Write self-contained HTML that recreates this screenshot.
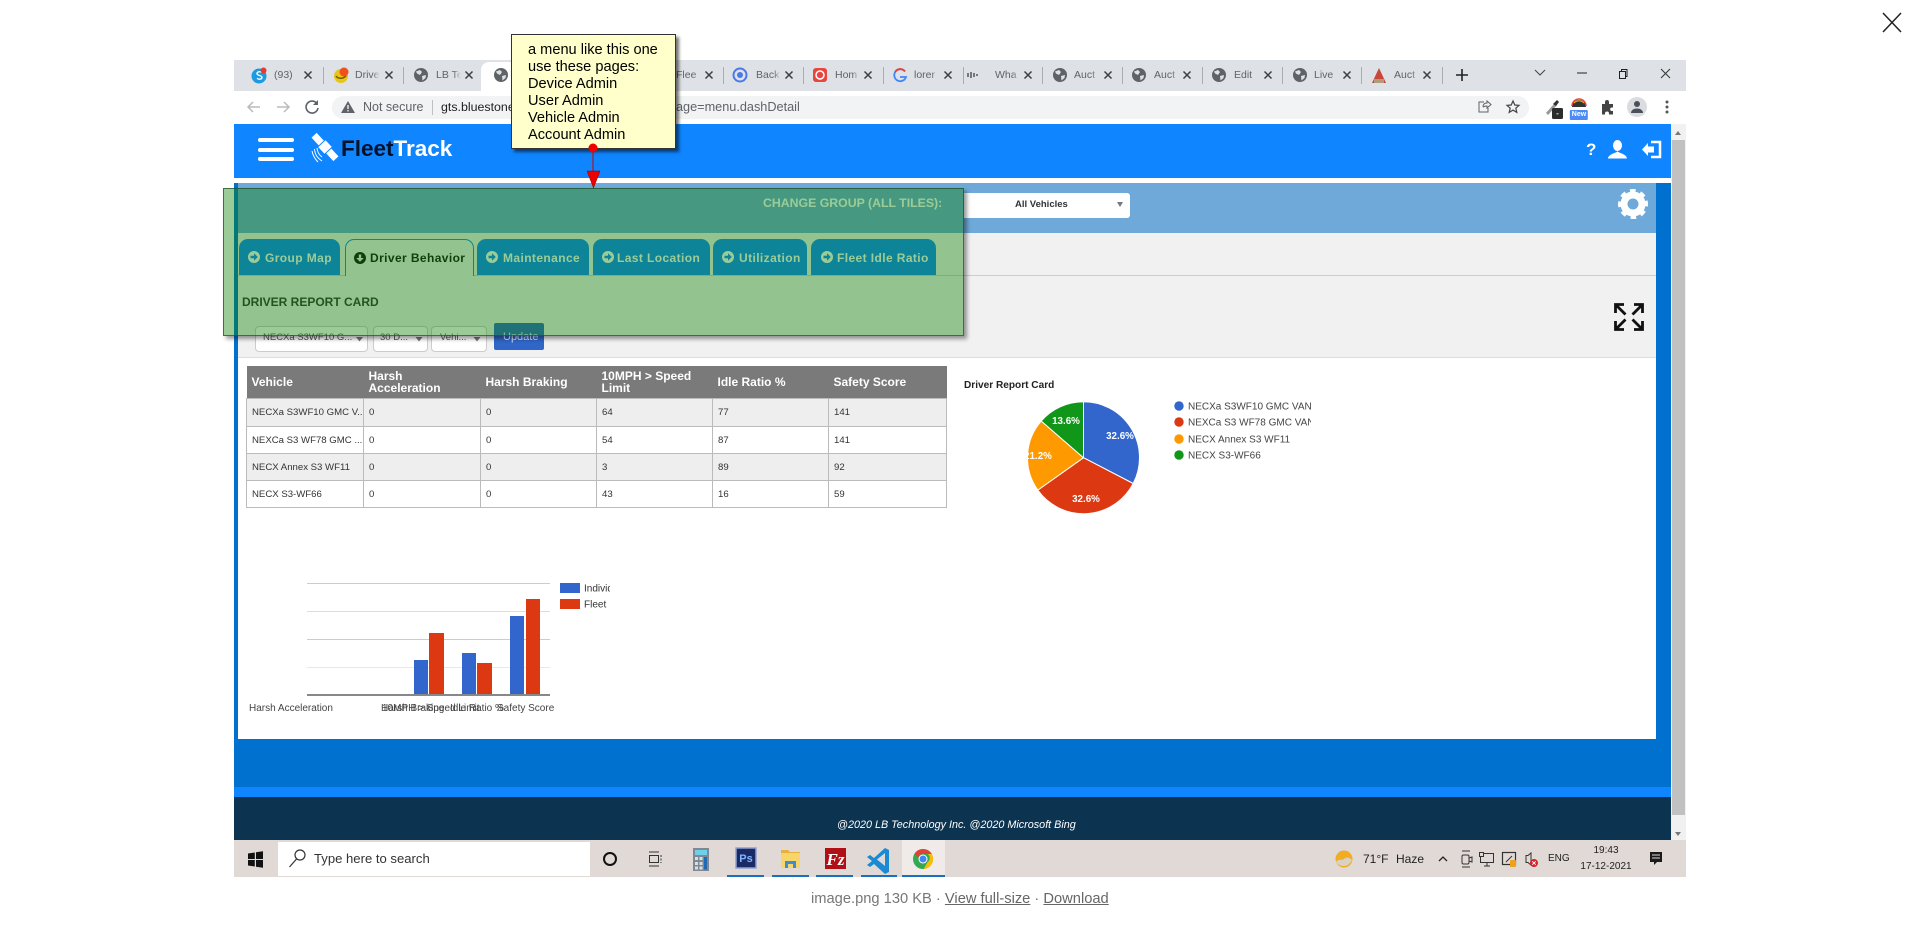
<!DOCTYPE html>
<html><head><meta charset="utf-8"><title>image.png</title>
<style>
html,body{margin:0;padding:0;background:#fff}
body{position:relative;width:1920px;height:937px;overflow:hidden;font-family:"Liberation Sans",sans-serif;color:#000}
.a{position:absolute;white-space:nowrap}
.b{position:absolute}
svg.l{position:absolute;left:0;top:0;overflow:visible}
.tab{font-size:10.5px;line-height:16px;top:67px;color:#5f6368;overflow:hidden;width:25px;-webkit-mask-image:linear-gradient(90deg,#000 70%,transparent);mask-image:linear-gradient(90deg,#000 70%,transparent)}
.pg{top:239px;height:36px;background:#0f85ff;border-radius:9px 9px 0 0}
.pt{font-weight:bold;font-size:12px;line-height:16px;top:250px;color:#fff;letter-spacing:.4px}
.sel{top:326px;height:24px;background:#fff;border:1px solid #ccc;border-radius:4px;box-sizing:content-box}
.st{font-size:9.5px;line-height:14px;top:331px;color:#555}
table{position:absolute;left:246px;top:366px;width:700px;height:141px;border-collapse:collapse;table-layout:fixed;font-size:9.6px;color:#333}
th{background:#7a7a7a;color:#fff;font-size:12px;line-height:12px;text-align:left;font-weight:bold;padding:0 5px;height:32px;border:0}
td{border:1px solid #bbb;padding:0 5px;white-space:nowrap;overflow:hidden}
tr.o td{background:#eee}
.note{position:absolute;left:511px;top:34px;width:163px;height:113px;background:#ffc;border:1px solid #333;box-shadow:3px 3px 3px rgba(0,0,0,.55)}
.nl{position:absolute;left:528px;font-size:14.6px;line-height:17px;color:#000;white-space:nowrap}
.ov{position:absolute;left:223px;top:188px;width:741px;height:148px;background:rgba(12,131,3,.41);box-shadow:inset 0 0 0 1px rgba(30,80,50,.75),3px 3px 4px rgba(0,0,0,.4)}
.cap{left:811px;top:890px;font-size:14.7px;line-height:18px;color:#777}
.cap u{color:#666}
</style></head>
<body>
<!-- browser chrome -->
<div class="b" style="left:234px;top:60px;width:1452px;height:31px;background:#dee1e6"></div>
<div class="b" style="left:481px;top:62px;width:180px;height:29px;background:#fff;border-radius:8px 8px 0 0"></div>
<div class="b" style="left:234px;top:91px;width:1452px;height:33px;background:#fff"></div>
<div class="b" style="left:332px;top:96px;width:1197px;height:23px;background:#f1f3f4;border-radius:12px"></div>

<!-- page -->
<div class="b" style="left:234px;top:124px;width:1437px;height:54px;background:#0f85ff"></div>
<div class="b" style="left:234px;top:183px;width:4px;height:556px;background:#0071ce"></div>
<div class="b" style="left:1656px;top:183px;width:15px;height:556px;background:#0071ce"></div>
<div class="b" style="left:238px;top:183px;width:1418px;height:50px;background:#6fa9d9"></div>
<div class="b" style="left:238px;top:233px;width:1418px;height:124px;background:#f1f1f1;border-bottom:1px solid #ddd"></div>
<div class="b" style="left:238px;top:275px;width:1418px;height:1px;background:#ccc"></div>
<div class="b" style="left:238px;top:358px;width:1418px;height:381px;background:#fff"></div>
<div class="b" style="left:234px;top:739px;width:1437px;height:48px;background:#0071ce"></div>
<div class="b" style="left:234px;top:787px;width:1437px;height:10px;background:#0f85ff"></div>
<div class="b" style="left:234px;top:797px;width:1437px;height:43px;background:#0c3350"></div>
<div class="b" style="left:1671px;top:124px;width:15px;height:716px;background:#f1f1f1"></div>
<div class="b" style="left:1672px;top:140px;width:13px;height:675px;background:#c1c1c1"></div>
<div class="b" style="left:234px;top:840px;width:1452px;height:37px;background:#e0d9d5"></div>
<div class="b" style="left:278px;top:842px;width:312px;height:34px;background:#fff"></div>
<div class="b" style="left:902px;top:840px;width:43px;height:37px;background:#f0ebe8"></div>

<!-- tab labels -->
<div class="a tab" style="left:274px">(93)</div>
<div class="a tab" style="left:355px">Drive</div>
<div class="a tab" style="left:436px">LB Te</div>
<div class="a tab" style="left:676px">Flee</div>
<div class="a tab" style="left:756px">Back</div>
<div class="a tab" style="left:835px">Hom</div>
<div class="a tab" style="left:914px">lorer</div>
<div class="a tab" style="left:995px">Wha</div>
<div class="a tab" style="left:1074px">Auct</div>
<div class="a tab" style="left:1154px">Auct</div>
<div class="a tab" style="left:1234px">Edit</div>
<div class="a tab" style="left:1314px">Live</div>
<div class="a tab" style="left:1394px">Auct</div>
<div class="a" style="left:363px;top:99px;font-size:12.5px;line-height:16px;color:#5f6368">Not secure</div>
<div class="a" style="left:441px;top:99px;font-size:12.4px;line-height:16px;color:#202124;width:70px;overflow:hidden">gts.bluestone</div>
<div class="a" style="left:676px;top:99px;font-size:12.7px;line-height:16px;color:#5f6368">age=menu.dashDetail</div>
<div class="a" style="left:1579px;top:110px;transform:translateX(-50%);font-size:7px;font-weight:bold;line-height:10px;color:#fff;background:#4c8bf5;padding:0 2px;border-radius:1px;z-index:2">New</div>

<!-- header text -->
<div class="a" style="left:341px;top:136px;font-size:22.5px;line-height:26px;font-weight:bold;color:#06122a">Fleet<span style="color:#fff">Track</span></div>
<div class="a" style="left:1586px;top:140px;font-size:17px;line-height:20px;font-weight:bold;color:#fff">?</div>

<!-- group bar -->
<div class="b" style="left:964px;top:193px;width:166px;height:25px;background:#fff;border-radius:0 3px 3px 0"></div>
<div class="a" style="left:1015px;top:198px;font-size:9.5px;font-weight:bold;line-height:14px;color:#333">All Vehicles</div>
<div class="a" style="left:763px;top:195px;font-size:12.3px;font-weight:bold;line-height:16px;color:#fff">CHANGE GROUP (ALL TILES):</div>

<!-- page tabs -->
<div class="b pg" style="left:239px;width:101px"></div>
<div class="b pg" style="left:345px;width:129px;background:#f1f1f1;border:1px solid #0f85ff;border-bottom:0;box-sizing:border-box;height:37px"></div>
<div class="b pg" style="left:477px;width:112px"></div>
<div class="b pg" style="left:593px;width:117px"></div>
<div class="b pg" style="left:713px;width:94px"></div>
<div class="b pg" style="left:811px;width:125px"></div>
<div class="a pt" style="left:265px">Group Map</div>
<div class="a pt" style="left:370px;color:#111">Driver Behavior</div>
<div class="a pt" style="left:503px">Maintenance</div>
<div class="a pt" style="left:617px">Last Location</div>
<div class="a pt" style="left:739px">Utilization</div>
<div class="a pt" style="left:837px">Fleet Idle Ratio</div>
<div class="a" style="left:242px;top:294px;font-size:12px;line-height:16px;font-weight:bold;color:#333">DRIVER REPORT CARD</div>

<!-- filters -->
<div class="b sel" style="left:255px;width:111px"></div>
<div class="b sel" style="left:373px;width:53px"></div>
<div class="b sel" style="left:431px;width:54px"></div>
<div class="a st" style="left:263px">NECXa S3WF10 G...</div>
<div class="a st" style="left:380px">30 D...</div>
<div class="a st" style="left:440px">Vehi...</div>
<div class="b" style="left:494px;top:323px;width:50px;height:27px;background:#2f66c8;border-radius:2px"></div>
<div class="a" style="left:503px;top:329px;font-size:11px;line-height:16px;color:#dfe8fa">Update</div>

<!-- table -->
<table>
<colgroup><col style="width:117px"><col style="width:117px"><col style="width:116px"><col style="width:116px"><col style="width:116px"><col style="width:118px"></colgroup>
<tr><th>Vehicle</th><th>Harsh<br>Acceleration</th><th>Harsh Braking</th><th>10MPH &gt; Speed<br>Limit</th><th>Idle Ratio %</th><th>Safety Score</th></tr>
<tr class="o" style="height:28px"><td>NECXa S3WF10 GMC V...</td><td>0</td><td>0</td><td>64</td><td>77</td><td>141</td></tr>
<tr style="height:27px"><td>NEXCa S3 WF78 GMC ...</td><td>0</td><td>0</td><td>54</td><td>87</td><td>141</td></tr>
<tr class="o" style="height:27px"><td>NECX Annex S3 WF11</td><td>0</td><td>0</td><td>3</td><td>89</td><td>92</td></tr>
<tr style="height:27px"><td>NECX S3-WF66</td><td>0</td><td>0</td><td>43</td><td>16</td><td>59</td></tr>
</table>

<!-- icons and charts -->
<svg class="l" width="1920" height="937" viewBox="0 0 1920 937">
<defs>
<g id="x"><path d="M-3.5-3.5L3.5 3.5M3.5-3.5L-3.5 3.5" stroke="#3c4043" stroke-width="1.5" fill="none"/></g>
<g id="gl"><circle r="7" fill="#5f6368"/><path d="M-5-3.5L-1-5 1-3-1 0-4-1.5ZM1 1L5 0 4.5 3 1.5 5.5Z" fill="#dee1e6"/></g>
<g id="arr"><circle r="6" fill="#fff"/><path d="M-3.5-1.2H0V-3.8L3.8 0 0 3.8V1.2H-3.5Z" fill="#0f85ff"/></g>
</defs>
<!-- tab separators -->
<g fill="#a9adb3"><rect x="323" y="67" width="1" height="17"/><rect x="403" y="67" width="1" height="17"/><rect x="723" y="67" width="1" height="17"/><rect x="803" y="67" width="1" height="17"/><rect x="883" y="67" width="1" height="17"/><rect x="963" y="67" width="1" height="17"/><rect x="1042" y="67" width="1" height="17"/><rect x="1122" y="67" width="1" height="17"/><rect x="1202" y="67" width="1" height="17"/><rect x="1282" y="67" width="1" height="17"/><rect x="1361" y="67" width="1" height="17"/><rect x="1442" y="67" width="1" height="17"/></g>
<use href="#x" x="308" y="75"/><use href="#x" x="389" y="75"/><use href="#x" x="469" y="75"/><use href="#x" x="709" y="75"/><use href="#x" x="789" y="75"/><use href="#x" x="868" y="75"/><use href="#x" x="948" y="75"/><use href="#x" x="1028" y="75"/><use href="#x" x="1108" y="75"/><use href="#x" x="1187" y="75"/><use href="#x" x="1268" y="75"/><use href="#x" x="1347" y="75"/><use href="#x" x="1427" y="75"/>
<!-- favicons -->
<circle cx="259" cy="76" r="7.5" fill="#1d9be0"/><path d="M262 72.5c-2-1.5-5-.8-5 1 0 2.500 5 1.500 5 4 0 1.800-3 2.300-5 .8" stroke="#fff" stroke-width="1.400" fill="none"/><circle cx="263.500" cy="70.500" r="3" fill="#e8392d"/>
<circle cx="341" cy="76" r="7" fill="#e6c619"/><path d="M336 76c2 3 7 3 10 0" stroke="#7a5a00" stroke-width="1.500" fill="none"/><circle cx="344" cy="72" r="4.500" fill="#f0501e"/>
<use href="#gl" x="421" y="75"/><use href="#gl" x="501" y="75"/><use href="#gl" x="1060" y="75"/><use href="#gl" x="1139" y="75"/><use href="#gl" x="1219" y="75"/><use href="#gl" x="1300" y="75"/>
<circle cx="740" cy="75" r="6.500" fill="none" stroke="#4a79e8" stroke-width="2"/><circle cx="740" cy="75" r="3" fill="#4a79e8"/>
<rect x="813" y="68" width="14" height="14" rx="3" fill="#e8453c"/><circle cx="820" cy="75" r="4" fill="none" stroke="#fff" stroke-width="1.500"/>
<path d="M905 71.500A6 6 0 1 0 906 77H900" fill="none" stroke="#4285f4" stroke-width="1.800"/><path d="M895 72A6 6 0 0 1 905 71.500" fill="none" stroke="#ea4335" stroke-width="1.800"/>
<path d="M971 72v6M974 73v4M968 73v4M977 74v2" stroke="#333" stroke-width="1.200"/>
<path d="M1379 68L1386 83H1372Z" fill="#c9473a"/><path d="M1374 79h10v4h-10z" fill="#b39a78"/>
<path d="M1462 69v12M1456 75h12" stroke="#222" stroke-width="1.600"/>
<!-- window controls -->
<path d="M1535 70l5 5 5-5" stroke="#444" fill="none"/><path d="M1577 73h10" stroke="#222"/>
<rect x="1619.500" y="71.500" width="6" height="7" fill="none" stroke="#222"/><path d="M1621.500 71v-1.500h5.500v7h-1.500" fill="none" stroke="#222"/>
<path d="M1661 69l9 9M1670 69l-9 9" stroke="#333" fill="none"/>
<!-- toolbar -->
<path d="M260 107h-12M253 102l-5 5 5 5" stroke="#b8bbbf" stroke-width="1.500" fill="none"/>
<path d="M277 107h12M284 102l5 5-5 5" stroke="#b8bbbf" stroke-width="1.500" fill="none"/>
<path d="M316.500 103A6 6 0 1 0 318 108" stroke="#5f6368" stroke-width="1.600" fill="none"/><path d="M318 100v5h-5z" fill="#5f6368"/>
<path d="M348 101l7 12h-14z" fill="#5f6368"/><rect x="347.300" y="105" width="1.400" height="4" fill="#f1f3f4"/><rect x="347.300" y="110" width="1.400" height="1.400" fill="#f1f3f4"/>
<rect x="432" y="100" width="1" height="15" fill="#bdc1c6"/>
<path d="M1484 102h-5v10h9v-4M1483 107c0-3 2-4 4-4v-2l4 3.500-4 3.500v-2c-2 0-3 .5-4 1" stroke="#5f6368" fill="none"/>
<path d="M1513 101l1.800 4 4.200.4-3.200 2.800 1 4.200-3.800-2.300-3.800 2.300 1-4.200-3.200-2.800 4.200-.4z" stroke="#444" fill="none" stroke-width="1.200"/>
<path d="M1547 114l9-10" stroke="#999" stroke-width="3"/><path d="M1553 104l4-4 2 2-3 4z" fill="#333"/>
<rect x="1552" y="108" width="11" height="11" rx="1.500" fill="#2c2c2c"/><rect x="1556.500" y="113" width="2" height="1.500" fill="#7c7"/>
<path d="M1572 107a7 7 0 0 1 14 0z" fill="#333"/><path d="M1572 106a7 7 0 0 1 14 0" fill="none" stroke="#e8453c" stroke-width="1.500"/><path d="M1574 103a7 7 0 0 1 10 0" fill="none" stroke="#f4b400" stroke-width="1"/>
<path d="M1602 104h3v-2a2 2 0 0 1 4 0v2h4v3.500h-1.500a1.800 1.800 0 0 0 0 3.500h1.500v3.500h-4v-1a2 2 0 0 0-4 0v1h-3z" fill="#444"/>
<circle cx="1637" cy="107" r="10" fill="#dadce0"/><circle cx="1637" cy="104" r="3" fill="#4a4f59"/><path d="M1631 113c0-6 12-6 12 0z" fill="#4a4f59"/>
<g fill="#555"><circle cx="1667" cy="102" r="1.500"/><circle cx="1667" cy="107" r="1.500"/><circle cx="1667" cy="112" r="1.500"/></g>
<!-- header icons -->
<g fill="#fff"><rect x="258" y="138" width="36" height="4" rx="2"/><rect x="258" y="148" width="36" height="4" rx="2"/><rect x="258" y="157" width="36" height="4" rx="2"/></g>
<g transform="rotate(-43 325 147)" fill="#fff"><rect x="320" y="142.500" width="10" height="9"/><rect x="321.500" y="131" width="7" height="10.500"/><rect x="321.500" y="152.500" width="7" height="10.500"/></g>
<path d="M317 148c.5 4 2 7 5 9M314.500 149c.5 6 3 9 7.500 12M312 151c1 5 3 8 6 11" stroke="#fff" fill="none"/>
<path d="M1617.500 140a4.500 5.500 0 0 1 0 11c0 2 9 2.500 9.500 7.500h-19c.5-5 9.500-5.500 9.500-7.500a4.500 5.500 0 0 1 0-11z" fill="#fff"/>
<path d="M1642 149.500l6-6.500v3.500h6v6h-6v3.500z" fill="#fff"/><path d="M1651 142h9v15h-9" fill="none" stroke="#fff" stroke-width="2.500"/>
<!-- scrollbar arrows -->
<path d="M1678 131l3 4h-6zM1678 836l3-4h-6z" fill="#777"/>
<!-- group bar -->
<path d="M1117 202h6l-3 5z" fill="#777"/>
<circle cx="1633" cy="204" r="9" fill="none" stroke="#fff" stroke-width="7"/>
<circle cx="1633" cy="204" r="12.500" fill="none" stroke="#fff" stroke-width="5" stroke-dasharray="5.200 4.600" transform="rotate(-14 1633 204)"/>
<!-- expand -->
<g fill="none" stroke="#111" stroke-width="2.800"><path d="M1615.500 313v-8.500h8.500M1616 305l9.500 9.500"/><path d="M1642.500 313v-8.500h-8.500M1642 305l-9.500 9.500"/><path d="M1615.500 321v8.500h8.500M1616 329l9.500-9.500"/><path d="M1642.500 321v8.500h-8.500M1642 329l-9.500-9.500"/></g>
<!-- page tab icons -->
<use href="#arr" x="254" y="257"/><use href="#arr" x="492" y="257"/><use href="#arr" x="608" y="257"/><use href="#arr" x="728" y="257"/><use href="#arr" x="827" y="257"/>
<circle cx="360" cy="258" r="6" fill="#111"/><path d="M358.800 254.500h2.400V258h2.600L360 261.800 356.200 258h2.600z" fill="#f1f1f1"/>
<!-- select arrows -->
<path d="M356 337h7l-3.500 4.500zM415.500 337h7l-3.500 4.500zM473.500 337h7l-3.500 4.500z" fill="#777"/>
<!-- pie -->
<text x="964" y="388" font-family="Liberation Sans" font-size="10.100" font-weight="bold" fill="#222">Driver Report Card</text>
<g stroke="#fff" stroke-width="1" transform="translate(.5 .7)">
<path d="M1083 457V401A56 56 0 0 1 1132.700 482.800Z" fill="#3366cc"/>
<path d="M1083 457L1132.700 482.800A56 56 0 0 1 1037.300 489.400Z" fill="#dc3912"/>
<path d="M1083 457L1037.300 489.400A56 56 0 0 1 1040.700 420.300Z" fill="#ff9900"/>
<path d="M1083 457L1040.700 420.300A56 56 0 0 1 1083 401Z" fill="#109618"/>
</g>
<clipPath id="c1"><rect x="1028" y="440" width="60" height="30"/></clipPath>
<g font-family="Liberation Sans" font-size="9.800" fill="#fff" text-anchor="middle" font-weight="bold">
<text x="1120" y="439">32.6%</text><text x="1086" y="502">32.6%</text><text x="1066" y="424">13.6%</text>
<text x="1038" y="459" clip-path="url(#c1)">21.2%</text>
</g>
<circle cx="1179" cy="406" r="4.700" fill="#3366cc"/><circle cx="1179" cy="422" r="4.700" fill="#dc3912"/><circle cx="1179" cy="439" r="4.700" fill="#ff9900"/><circle cx="1179" cy="455" r="4.700" fill="#109618"/>
<clipPath id="c2"><rect x="1186" y="398" width="125" height="66"/></clipPath>
<g font-family="Liberation Sans" font-size="10" fill="#444" clip-path="url(#c2)">
<text x="1188" y="409.500">NECXa S3WF10 GMC VAN</text><text x="1188" y="425.500">NEXCa S3 WF78 GMC VAN</text><text x="1188" y="442.500">NECX Annex S3 WF11</text><text x="1188" y="458.500">NECX S3-WF66</text>
</g>
<!-- bar chart -->
<g fill="#ccc"><rect x="307" y="583" width="243" height="1"/><rect x="307" y="611" width="243" height="1" fill="#ddd"/><rect x="307" y="639" width="243" height="1"/><rect x="307" y="667" width="243" height="1" fill="#e8e8e8"/></g>
<g fill="#3366cc"><rect x="414" y="660" width="14" height="35"/><rect x="462" y="653" width="14" height="42"/><rect x="510" y="616" width="14" height="79"/></g>
<g fill="#dc3912"><rect x="429" y="633" width="15" height="62"/><rect x="477" y="663" width="15" height="32"/><rect x="526" y="599" width="14" height="96"/></g>
<rect x="307" y="694" width="243" height="2" fill="#888"/>
<rect x="560" y="583" width="20" height="10" fill="#3366cc"/><rect x="560" y="599" width="20" height="10" fill="#dc3912"/>
<clipPath id="c3"><rect x="584" y="580" width="26" height="32"/></clipPath>
<g font-family="Liberation Sans" font-size="10" fill="#333" clip-path="url(#c3)"><text x="584" y="591.500">Individual</text><text x="584" y="607.500">Fleet</text></g>
<g font-family="Liberation Sans" font-size="10" fill="#444">
<text x="249" y="711">Harsh Acceleration</text><text x="381" y="711">Harsh Braking</text><text x="382" y="711">10MPH &gt; Speed Limit</text><text x="450" y="711">Idle Ratio %</text><text x="497" y="711">Safety Score</text>
</g>
<!-- taskbar -->
<g fill="#111"><path d="M248 853.500l6.800-1v6.500h-6.800zM256 852.300l7-1.100v7.800h-7zM248 860h6.800v6.500l-6.800-1zM256 860h7v7.800l-7-1.100z"/></g>
<circle cx="300" cy="855" r="5" fill="none" stroke="#333" stroke-width="1.200"/><path d="M296.500 859l-7 8" stroke="#333" stroke-width="1.200"/>
<circle cx="610" cy="859" r="6" fill="none" stroke="#111" stroke-width="2"/>
<path d="M649 852h10M649 866h10" stroke="#333"/><rect x="649.500" y="855.500" width="9" height="7" fill="none" stroke="#333"/><path d="M661 855v8" stroke="#333" stroke-dasharray="2 1.500"/>
<rect x="693" y="848" width="16" height="23" fill="#7d8a94"/><rect x="695" y="850" width="12" height="5" fill="#6fd0ec"/><g fill="#d8dde0"><rect x="695" y="857" width="3" height="3"/><rect x="699.500" y="857" width="3" height="3"/><rect x="695" y="862" width="3" height="3"/><rect x="699.500" y="862" width="3" height="3"/><rect x="695" y="866.500" width="3" height="3"/><rect x="699.500" y="866.500" width="3" height="3"/></g><rect x="704" y="857" width="3" height="12.500" fill="#2168b5"/>
<rect x="736" y="848" width="20" height="20" fill="#1a2a66" stroke="#8fa3d0" stroke-width="1.500"/><text x="746" y="862" font-family="Liberation Sans" font-size="11" font-weight="bold" fill="#7fb7ff" text-anchor="middle">Ps</text>
<path d="M781 850h7l2 2h10v7h-19z" fill="#e8b23a"/><path d="M781 853h19v15h-19z" fill="#f7d56a"/><path d="M785 868v-7h11v7h-3v-4h-5v4z" fill="#3a8fd0"/>
<rect x="825" y="848" width="21" height="21" fill="#b01015"/><text x="835.500" y="865" font-family="Liberation Serif" font-size="17" font-weight="bold" font-style="italic" fill="#fff" text-anchor="middle">Fz</text>
<path d="M885 848l-11 10-4-3-3 2 5 4-5 4 3 2 4-3 11 10 4-2v-22zM885 853v13l-8-6.500z" fill="#1a8ad4" fill-rule="evenodd"/>
<circle cx="923" cy="859" r="10" fill="#34a853"/><path d="M923 849a10 10 0 0 1 8.700 5H923a5 5 0 0 0-4.800 3.500L914.500 854a10 10 0 0 1 8.500-5z" fill="#db4437"/><path d="M931.700 854a10 10 0 0 1-8 15l4-7a5 5 0 0 0 0-8z" fill="#fbbc05"/><circle cx="923" cy="859" r="4.500" fill="#fff"/><circle cx="923" cy="859" r="3.500" fill="#4285f4"/>
<g fill="#1a70c0"><rect x="727" y="875" width="37" height="2"/><rect x="772" y="875" width="37" height="2"/><rect x="816" y="875" width="37" height="2"/><rect x="861" y="875" width="36" height="2"/><rect x="902" y="875" width="43" height="2"/></g>
<!-- tray -->
<circle cx="1344" cy="859" r="8.500" fill="#f2ab25"/><path d="M1336 862c3-4 6-1 8-3s5-2 8 1c-2 4-5 6-8 6s-6-1-8-4z" fill="#d8d2c4"/>
<path d="M1439 861l4-4 4 4" stroke="#222" fill="none" stroke-width="1.300"/>
<rect x="1462" y="855" width="7" height="9" rx="1.500" fill="none" stroke="#333"/><path d="M1462 851h8M1462 867h8M1469 858l3-1v5l-3-1" stroke="#333" fill="none"/>
<rect x="1480.500" y="853.500" width="13" height="9" fill="none" stroke="#333"/><rect x="1479.500" y="852.500" width="4" height="4" fill="#e0d9d5" stroke="#333"/><path d="M1487 863v3M1484 866h6" stroke="#333"/>
<rect x="1502.500" y="852.500" width="13" height="12" fill="none" stroke="#333" stroke-width="1.200"/><path d="M1506 862l6-6" stroke="#333"/><rect x="1510" y="860" width="6" height="7" rx="1" fill="#f0a01a"/>
<path d="M1526 855.500h2l3-2.500v12l-3-2.500h-2z" fill="none" stroke="#333"/><circle cx="1534" cy="863" r="4" fill="#d8202a"/><path d="M1532.300 861.300l3.400 3.400M1535.700 861.300l-3.400 3.400" stroke="#fff"/>
<path d="M1650 852h12v10h-5l-3 3v-3h-4z" fill="#1a1a1a"/><path d="M1652 855h8M1652 858h8" stroke="#e0d9d5"/>
</svg>

<!-- taskbar text -->
<div class="a" style="left:314px;top:851px;font-size:13.1px;line-height:16px;color:#333">Type here to search</div>
<div class="a" style="left:1363px;top:851px;font-size:12px;line-height:16px;color:#222">71°F</div>
<div class="a" style="left:1396px;top:851px;font-size:12px;line-height:16px;color:#222">Haze</div>
<div class="a" style="left:1548px;top:852px;font-size:10px;line-height:14px;color:#222">ENG</div>
<div class="a" style="left:1576px;width:60px;text-align:center;top:844px;font-size:10px;line-height:14px;color:#222">19:43</div>
<div class="a" style="left:1576px;width:60px;text-align:center;top:860px;font-size:10px;line-height:14px;color:#222">17-12-2021</div>
<div class="a" style="left:837px;top:817px;font-size:10.8px;line-height:16px;font-style:italic;color:#fff">@2020 LB Technology Inc. @2020 Microsoft Bing</div>

<!-- caption -->
<div class="a cap">image.png 130 KB · <u>View full-size</u> · <u>Download</u></div>

<!-- close -->
<svg class="l" width="1920" height="937" viewBox="0 0 1920 937"><path d="M1883 13l18 19M1901 13l-18 19" stroke="#222" stroke-width="1.500" fill="none"/></svg>

<!-- highlight overlay -->
<div class="ov"></div>

<!-- note -->
<div class="note"></div>
<div class="nl" style="top:42px">a menu like this one</div>
<div class="nl" style="top:59px">use these pages:</div>
<div class="nl" style="top:76px">Device Admin</div>
<div class="nl" style="top:93px">User Admin</div>
<div class="nl" style="top:110px">Vehicle Admin</div>
<div class="nl" style="top:127px">Account Admin</div>
<svg class="l" width="1920" height="937" viewBox="0 0 1920 937"><path d="M593 148V172" stroke="#c00" stroke-width="1"/><circle cx="593" cy="148" r="4.500" fill="#e00"/><path d="M587 171h13l-6.500 17z" fill="#e00" stroke="#800" stroke-width=".5"/></svg>
</body></html>
